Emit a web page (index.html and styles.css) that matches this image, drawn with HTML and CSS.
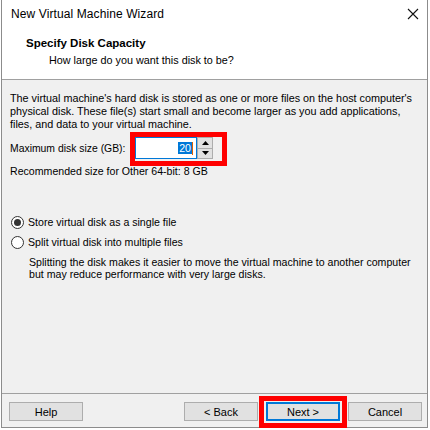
FILE: index.html
```html
<!DOCTYPE html>
<html>
<head>
<meta charset="utf-8">
<link rel="stylesheet" href="styles.css">
</head>
<body>
<div class="window">
  <div class="titlebar">
    <span class="title">New Virtual Machine Wizard</span>
    <svg class="close" width="12" height="12" viewBox="0 0 12 12"><path d="M1 1 L11 11 M11 1 L1 11" stroke="#111" stroke-width="1.1" fill="none"/></svg>
  </div>
  <div class="header">
    <div class="h-title">Specify Disk Capacity</div>
    <div class="h-sub">How large do you want this disk to be?</div>
  </div>
  <div class="content">
    <p class="desc">The virtual machine's hard disk is stored as one or more files on the host computer's<br>physical disk. These file(s) start small and become larger as you add applications,<br>files, and data to your virtual machine.</p>
    <div class="size-row">
      <span class="size-label">Maximum disk size (GB):</span>
      <div class="spin">
        <div class="spin-input"><span class="sel">20</span><span class="caret"></span></div>
        <div class="spin-btns">
          <div class="sb"><svg width="7" height="4" viewBox="0 0 7 4"><path d="M3.5 0 L7 4 L0 4 Z" fill="#000"/></svg></div>
          <div class="sb"><svg width="7" height="4" viewBox="0 0 7 4"><path d="M0 0 L7 0 L3.5 4 Z" fill="#000"/></svg></div>
        </div>
        <div class="redbox red-spin"></div>
      </div>
    </div>
    <div class="rec">Recommended size for Other 64-bit: 8 GB</div>
    <div class="radio-row">
      <span class="radio checked"><span class="dot"></span></span>
      <span>Store virtual disk as a single file</span>
    </div>
    <div class="radio-row">
      <span class="radio"></span>
      <span>Split virtual disk into multiple files</span>
    </div>
    <p class="split-desc">Splitting the disk makes it easier to move the virtual machine to another computer<br>but may reduce performance with very large disks.</p>
  </div>
  <div class="footer">
    <button class="btn">Help</button>
    <div class="spacer"></div>
    <button class="btn">&lt; Back</button>
    <div class="next-wrap">
      <button class="btn default">Next &gt;</button>
      <div class="redbox red-next"></div>
    </div>
    <button class="btn">Cancel</button>
  </div>
</div>
</body>
</html>
```
FILE: styles.css
```css
html, body {
  margin: 0;
  padding: 0;
  background: #ffffff;
}
body {
  font-family: "Liberation Sans", Arial, sans-serif;
  font-size: 11px;
  color: #000;
}
.window {
  margin-left: 1px;
  width: 427px;
  height: 428px;
  box-sizing: border-box;
  border: 1px solid #8c8c8c;
  border-top: none;
  display: flex;
  flex-direction: column;
  background: #f0f0f0;
}
.titlebar {
  height: 28px;
  background: #fff;
  display: flex;
  align-items: center;
  justify-content: space-between;
  padding: 0 8px 0 9px;
}
.title {
  font-size: 12px;
  color: #000;
  letter-spacing: 0.1px;
}
.close {
  display: block;
  margin-top: -1px;
}
.header {
  height: 52px;
  background: #fff;
  box-sizing: border-box;
  border-bottom: 1px solid #a0a0a0;
  padding: 8px 0 0 24px;
}
.h-title {
  font-weight: bold;
  line-height: 15px;
  font-size: 11.5px;
}
.h-sub {
  margin: 2px 0 0 23px;
  line-height: 15px;
  font-size: 10.8px;
}
.content {
  flex: 1;
  padding: 12px 0 0 8px;
  font-size: 10.6px;
}
.desc {
  margin: 0;
  line-height: 13px;
  font-size: 10.8px;
}
.size-row {
  margin-top: 6px;
  display: flex;
  align-items: center;
  height: 22px;
}
.size-label {
  width: 125px;
  font-size: 10.4px;
}
.spin {
  position: relative;
  display: flex;
  height: 22px;
}
.spin-input {
  width: 62px;
  box-sizing: border-box;
  background: #fff;
  border: 1px solid #0078d7;
  display: flex;
  align-items: center;
  justify-content: flex-end;
  padding-right: 3px;
}
.sel {
  background: #0078d7;
  color: #fff;
  line-height: 12px;
  padding: 0 1px;
}
.caret {
  width: 1px;
  height: 13px;
  background: #e06000;
}
.spin-btns {
  width: 16px;
  display: flex;
  flex-direction: column;
}
.sb {
  flex: 1;
  box-sizing: border-box;
  background: #e1e1e1;
  border: 1px solid #adadad;
  display: flex;
  align-items: center;
  justify-content: center;
}
.sb + .sb {
  border-top: none;
}
.redbox {
  position: absolute;
  border: 5px solid #ff0000;
  box-sizing: border-box;
  pointer-events: none;
}
.red-spin {
  left: -5px;
  top: -5px;
  width: 97px;
  height: 34px;
}
.rec {
  margin-top: 6px;
  line-height: 13px;
}
.radio-row {
  display: flex;
  align-items: center;
  height: 20px;
}
.rec + .radio-row {
  margin-top: 34px;
}
.radio {
  width: 13px;
  height: 13px;
  box-sizing: border-box;
  border: 1px solid #333;
  border-radius: 50%;
  background: #fff;
  margin: 0 4px 0 1px;
  display: flex;
  align-items: center;
  justify-content: center;
}
.dot {
  width: 7px;
  height: 7px;
  border-radius: 50%;
  background: #333;
}
.split-desc {
  margin: 4px 0 0 19px;
  line-height: 12px;
}
.footer {
  height: 34px;
  box-sizing: border-box;
  border-top: 1px solid #a0a0a0;
  display: flex;
  align-items: flex-start;
  padding: 8px 5px 0 7px;
  gap: 8px;
}
.spacer {
  flex: 1;
}
.btn {
  width: 74px;
  height: 19px;
  box-sizing: border-box;
  background: #e1e1e1;
  border: 1px solid #adadad;
  font-family: "Liberation Sans", Arial, sans-serif;
  font-size: 11px;
  color: #000;
  padding: 0;
  margin: 0;
}
.btn.default {
  border: 2px solid #0078d7;
}
.next-wrap {
  position: relative;
  display: flex;
}
.red-next {
  left: -7px;
  top: -6px;
  width: 88px;
  height: 32px;
}
```
